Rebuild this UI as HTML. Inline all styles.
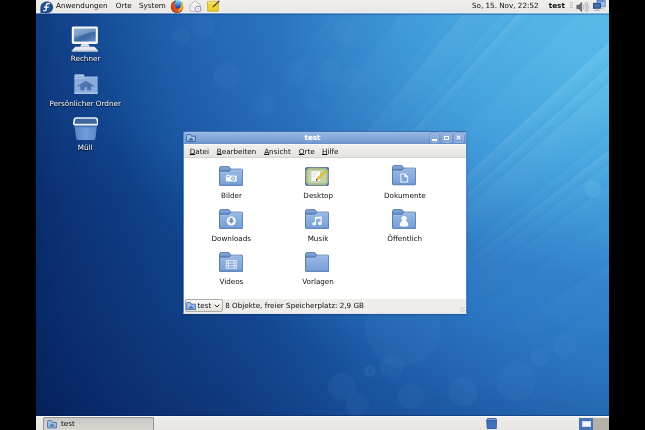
<!DOCTYPE html>
<html lang="de">
<head>
<meta charset="utf-8">
<title>test</title>
<style>
*{box-sizing:border-box;margin:0;padding:0}
html,body{width:645px;height:430px;background:#000;overflow:hidden}
body{font-family:"DejaVu Sans","Liberation Sans",sans-serif;font-size:7.2px;line-height:9px;color:#0c0c0c;position:relative}
.abs{position:absolute}
#desk{position:absolute;left:36px;top:0;width:573px;height:430px;overflow:hidden;opacity:.999;
 background:
  linear-gradient(90deg, rgba(0,12,56,.24) 0px, rgba(0,12,56,.14) 25px, rgba(0,12,56,.05) 70px, rgba(0,12,56,0) 130px),
  radial-gradient(ellipse 340px 340px at 0px 450px, rgba(0,14,62,.42) 0%, rgba(0,14,62,.24) 50%, rgba(0,14,62,0) 100%),
  linear-gradient(180deg, rgba(44,126,204,.24) 0%, rgba(44,124,200,.12) 22%, rgba(8,28,80,0) 46%, rgba(8,28,90,0) 72%, rgba(4,22,84,.10) 88%, rgba(2,18,76,.22) 100%),
  radial-gradient(ellipse 580px 440px at 620px -5px, rgba(100,208,244,1) 0%, rgba(88,194,238,.98) 20%, rgba(70,168,226,.9) 42%, rgba(54,136,206,.58) 66%, rgba(40,112,192,0) 100%),
  linear-gradient(95deg,#0d3b86 0%,#124994 25%,#17509d 42%,#1d5ca9 60%,#266ebc 80%,#2b7cc6 100%);
}
#rays{position:absolute;left:0;top:0;width:573px;height:430px;
 background:conic-gradient(from 0deg at -165px 732px,rgba(255,255,255,0) 0deg,rgba(255,255,255,0) 29deg,rgba(255,255,255,0.07) 29.55deg,rgba(255,255,255,0.01) 30.80deg,rgba(255,255,255,0.05) 30.85deg,rgba(255,255,255,0.01) 32.60deg,rgba(255,255,255,0.13) 32.65deg,rgba(255,255,255,0.02) 33.30deg,rgba(255,255,255,0.09) 33.35deg,rgba(255,255,255,0.01) 34.00deg,rgba(255,255,255,0.05) 34.05deg,rgba(255,255,255,0.01) 36.40deg,rgba(255,255,255,0.07) 36.45deg,rgba(255,255,255,0.01) 38.80deg,rgba(255,255,255,0.05) 38.85deg,rgba(255,255,255,0.01) 39.50deg,rgba(255,255,255,0.11) 39.55deg,rgba(255,255,255,0.02) 41.30deg,rgba(255,255,255,0.07) 41.35deg,rgba(255,255,255,0.01) 42.00deg,rgba(255,255,255,0.13) 42.05deg,rgba(255,255,255,0.02) 42.70deg,rgba(255,255,255,0.05) 42.75deg,rgba(255,255,255,0.01) 44.50deg,rgba(255,255,255,0.05) 44.55deg,rgba(255,255,255,0.01) 46.90deg,rgba(255,255,255,0.13) 46.95deg,rgba(255,255,255,0.02) 47.90deg,rgba(255,255,255,0.13) 47.95deg,rgba(255,255,255,0.02) 48.60deg,rgba(255,255,255,0.11) 48.65deg,rgba(255,255,255,0.02) 51.00deg,rgba(255,255,255,0.07) 51.05deg,rgba(255,255,255,0.01) 51.70deg,rgba(255,255,255,0.13) 51.75deg,rgba(255,255,255,0.02) 52.40deg,rgba(255,255,255,0.09) 52.45deg,rgba(255,255,255,0.01) 53.40deg,rgba(255,255,255,0.07) 53.45deg,rgba(255,255,255,0.01) 55.20deg,rgba(255,255,255,0.05) 55.25deg,rgba(255,255,255,0.01) 57.60deg,rgba(255,255,255,0.09) 57.65deg,rgba(255,255,255,0.01) 60.00deg,rgba(255,255,255,0.07) 60.05deg,rgba(255,255,255,0.01) 62.40deg,rgba(255,255,255,0) 62.90deg,rgba(255,255,255,0) 360deg);
 -webkit-mask-image:radial-gradient(ellipse 340px 340px at 573px 30px,#000 0%,rgba(0,0,0,.85) 40%,rgba(0,0,0,.4) 70%,transparent 100%);
 mask-image:radial-gradient(ellipse 340px 340px at 573px 30px,#000 0%,rgba(0,0,0,.85) 40%,rgba(0,0,0,.4) 70%,transparent 100%);
}
.bk{position:absolute;border-radius:50%;background:rgba(120,190,240,.07);transform:translate(-50%,-50%);filter:blur(.8px)}
.panel{position:absolute;left:0;width:573px}
#top{top:0;height:13px;border-bottom:1px solid #e9eff8;background:linear-gradient(#f1efec,#eae8e4);box-shadow:0 1px 0 rgba(205,222,245,.5),0 2px 0 rgba(8,36,96,.30)}
#bot{top:416px;height:14px;border-top:1px solid #fafafa;background:linear-gradient(#eeece9,#e8e6e2);box-shadow:0 -1px 0 rgba(0,18,64,.32)}
.t{position:absolute;white-space:nowrap;line-height:9px}
.w{color:#fff;text-shadow:0 1px 1px rgba(0,0,0,.85),0 0 1px rgba(0,0,0,.5)}
.c{transform:translateX(-50%)}
u{text-decoration:underline;text-underline-offset:.3px;text-decoration-thickness:.6px}
#win{position:absolute;left:147px;top:131px;width:283.5px;height:183px;background:#7a9fd4;border-radius:3px 3px 0 0;
 border:1px solid #5585c6;border-top-color:#3f6cae;border-right-color:#4c8ccf;border-bottom-color:#dde5f1;box-shadow:0 1px 2px rgba(0,0,30,.25)}
#tb{position:absolute;left:0;top:0;width:281.5px;height:12px;border-radius:2px 2px 0 0;background:linear-gradient(#a6c4ea 0%,#93b5e2 10%,#86aadb 45%,#7299d0 92%,#5f8ac6 100%)}
#mb{position:absolute;left:0;top:12px;width:281.5px;height:14px;background:linear-gradient(#f1efec,#e6e4df);border-top:1px solid #fbfaf9;border-bottom:1px solid #d6d3cd}
#ct{position:absolute;left:0;top:26px;width:281.5px;height:141px;background:#fff}
#sb{position:absolute;left:0;top:167px;width:281.5px;height:14px;background:#efedea}
.wb{position:absolute;top:1.2px;width:9.5px;height:9.5px;border:1px solid #9dbae3;border-radius:2.5px;background:linear-gradient(#92b2e0,#7da2d6);box-shadow:0 0 0 .6px #6188c1}
</style>
</head>
<body>
<div id="desk">
 <div id="rays"></div>
 <div class="bk" style="left:529px;top:346px;width:24px;height:24px"></div>
 <div class="bk" style="left:503px;top:358px;width:19px;height:19px"></div>
 <div class="bk" style="left:480px;top:381px;width:40px;height:40px;background:rgba(120,190,240,.06)"></div>
 <div class="bk" style="left:427px;top:392px;width:30px;height:30px"></div>
 <div class="bk" style="left:375px;top:396px;width:26px;height:26px"></div>
 <div class="bk" style="left:356px;top:366px;width:24px;height:24px;background:rgba(120,190,240,.07)"></div>
 <div class="bk" style="left:367px;top:329px;width:76px;height:76px;background:rgba(120,190,240,.05)"></div>
 <div class="bk" style="left:306px;top:387px;width:28px;height:28px;background:rgba(120,190,240,.07)"></div>
 <div class="bk" style="left:321px;top:405px;width:24px;height:24px;background:rgba(120,190,240,.07)"></div>
 <div class="bk" style="left:334px;top:371px;width:10px;height:10px;background:rgba(90,150,220,.10);border:1.500px solid rgba(120,175,235,.28)"></div>
 <div class="bk" style="left:557px;top:189px;width:17px;height:17px;background:rgba(150,215,250,.16)"></div>

 <div class="bk" style="left:145px;top:36px;width:18px;height:18px;background:rgba(130,190,240,.055)"></div>
 <div class="bk" style="left:167px;top:26px;width:24px;height:24px;background:rgba(130,190,240,.055)"></div>
 <div class="bk" style="left:191px;top:76px;width:28px;height:28px;background:rgba(130,190,240,.055)"></div>
 <div class="bk" style="left:229px;top:105px;width:22px;height:22px;background:rgba(130,190,240,.055)"></div>
 <div class="bk" style="left:258px;top:73px;width:24px;height:24px;background:rgba(130,190,240,.055)"></div>
 <div class="bk" style="left:294px;top:71px;width:24px;height:24px;background:rgba(130,190,240,.055)"></div>
 <div class="bk" style="left:275px;top:104px;width:16px;height:16px;background:rgba(130,190,240,.055)"></div>
 <div class="bk" style="left:309px;top:32px;width:26px;height:26px;background:rgba(130,190,240,.055)"></div>
 <div class="bk" style="left:316px;top:78px;width:22px;height:22px;background:rgba(130,190,240,.055)"></div>
 <!-- top panel -->
 <div class="panel" id="top"></div>
 <svg class="abs" style="left:4px;top:.5px" width="13.5" height="12.5" viewBox="0 0 13.5 12.5">
  <path d="M6.9.4c3.400 0 6.200 2.600 6.200 5.900s-2.800 5.900-6.200 5.900H1.800c-.9 0-1.400-.5-1.400-1.300V6.300C.4 3 3.500.4 6.900.4z" fill="#264f8f"/>
  <path d="M9.400 2.700c-1.900-.6-3.200.3-3.200 2v3.200c0 1.400-1 2.200-2.500 1.800M4.400 6.200h3.900" stroke="#fff" stroke-width="1.300" fill="none" stroke-linecap="round"/>
 </svg>
 <div class="t" style="left:20px;top:1.400px">Anwendungen</div>
 <div class="t" style="left:79.800px;top:1.400px">Orte</div>
 <div class="t" style="left:103px;top:1.400px">System</div>
 <!-- firefox -->
 <svg class="abs" style="left:134.300px;top:-.5px" width="14" height="13.500" viewBox="0 0 14 13.500">
  <defs><linearGradient id="fx" x1="0" y1="0" x2="1" y2="0"><stop offset="0" stop-color="#c23a1c"/><stop offset=".5" stop-color="#e0602a"/><stop offset=".78" stop-color="#e89a2c"/><stop offset="1" stop-color="#ecc030"/></linearGradient>
  <linearGradient id="gl" x1="0" y1="0" x2="0" y2="1"><stop offset="0" stop-color="#a6e2f4"/><stop offset=".45" stop-color="#4a9be0"/><stop offset="1" stop-color="#18358a"/></linearGradient></defs>
  <circle cx="7" cy="6.700" r="6.300" fill="#8a2c14"/>
  <circle cx="7" cy="6.600" r="5.900" fill="url(#fx)"/>
  <ellipse cx="7.600" cy="4.100" rx="3.900" ry="4.400" fill="url(#gl)"/>
  <path d="M.9 5c1-1.800 2.300-2.700 3.600-3-.5.900-.4 1.900.2 2.700.7 1 1.300 2.400 1.300 3.400.9.900 2.500 1.100 3.700.4-1 1.700-3.400 2.300-5.300 1.300C2.200 8.700 1.100 7 .9 5z" fill="#d24a22"/>
  <path d="M3.600 1.300c.7-.5 1.500-.8 2.300-.9-.6.700-.8 1.500-.6 2.300z" fill="#5a2a1c"/>
  <path d="M10.800 2.300c1.200 2.200.7 5.400-1.800 7.300 1.700-.3 3.500-2 3.900-4.100.2-1.300-.6-2.700-2.100-3.200z" fill="#e9b52e"/>
 </svg>
 <!-- mail -->
 <svg class="abs" style="left:152.500px;top:0" width="13.500" height="12.500" viewBox="0 0 13.500 12.500">
  <path d="M1 5.200 6.300.6l5.300 4.600v6H1z" fill="#f7f5f3" stroke="#a9a3ad" stroke-width=".8"/>
  <path d="M1.500 5.600 6.300 8.600l4.800-3" fill="none" stroke="#c6c2c4" stroke-width=".6"/>
  <circle cx="9" cy="8.900" r="2.900" fill="#fbfbfd" stroke="#8f7fb8" stroke-width=".9"/>
  <path d="M9 7.300v1.700l1 .6" stroke="#8a6a88" stroke-width=".6" fill="none"/>
 </svg>
 <!-- note -->
 <svg class="abs" style="left:171px;top:0" width="13" height="12" viewBox="0 0 13 12">
  <rect x=".5" y="1.300" width="11" height="10" rx=".6" fill="#f0d535" stroke="#c9ad26" stroke-width=".8"/>
  <rect x="1" y="1.700" width="10" height="2.200" fill="#f7e66a"/>
  <path d="M1 9.300h10v1.600H1z" fill="#e3c52c"/>
  <path d="M12 .3 6.200 5.800l-1 2 2-1L12.800 1.200z" fill="#4d4a3a"/>
 </svg>
 <div class="t" style="left:436px;top:1.400px">So, 15. Nov, 22:52</div>
 <div class="t" style="left:512.800px;top:1.400px;font-weight:bold">test</div>
 <div class="abs" style="left:534.300px;top:2px;width:3px;height:7px;background:radial-gradient(circle at .6px .6px,#b8b5ae .55px,transparent .7px) 0 0/1.600px 1.700px"></div>
 <!-- speaker -->
 <svg class="abs" style="left:540px;top:1px" width="13" height="12" viewBox="0 0 13 12">
  <path d="M.8 4.300h2L5.600 1.400v9.200L2.800 7.700h-2z" fill="#6e6e6a" stroke="#4a4a46" stroke-width=".6"/>
  <path d="M7.200 3.600c1 1.300 1 3.500 0 4.800M8.900 2c1.800 2.300 1.800 5.700 0 8M10.500 1c2.200 3 2.200 7 0 10" stroke="#8e9bb5" stroke-width=".8" fill="none"/>
 </svg>
 <!-- network -->
 <svg class="abs" style="left:556.500px;top:.3px" width="13" height="12" viewBox="0 0 13 12">
  <rect x="4" y=".5" width="8.200" height="6.300" fill="#9cbde9" stroke="#5579b2" stroke-width=".7"/>
  <path d="M4 .5h8.200v1.300H4z" fill="#5d84c0"/>
  <path d="M9 6.800h1.600v2h1.900v.8H8z" fill="#c3cbd9"/>
  <rect x=".5" y="3.200" width="7" height="5.200" fill="#2a4b8a" stroke="#223c70" stroke-width=".7"/>
  <rect x="1.400" y="4.100" width="5.200" height="3.400" fill="#4a75ba"/>
  <path d="M3 8.700h2v1.300h1.800v1H1.200v-1H3z" fill="#b4bfd2"/>
 </svg>

 <!-- desktop icons -->
 <svg class="abs" style="left:35.200px;top:26.200px" width="27.800" height="26.300" viewBox="0 0 27.500 26.500" preserveAspectRatio="none">
  <defs><linearGradient id="sc" x1="0" y1="0" x2="1" y2="1"><stop offset="0" stop-color="#86a5cc"/><stop offset=".42" stop-color="#4d7ab2"/><stop offset=".56" stop-color="#3a679f"/><stop offset="1" stop-color="#6c92c4"/></linearGradient></defs>
  <rect x=".8" y=".6" width="25.800" height="17.600" rx="1.500" fill="#f7f8fa"/>
  <rect x="2.900" y="2.700" width="21.600" height="13" fill="url(#sc)"/>
  <path d="M2.900 11.500C10 9 18 6.500 24.500 5.800V2.700H2.900z" fill="#a6c0de" opacity=".45"/>
  <path d="M10.300 18.200h7l1.300 2.600H9z" fill="#dde1e9"/>
  <path d="M4.300 20.800h19l3.600 4.100H.6z" fill="#f3f4f7"/>
  <path d="M4.500 22h18.500M3.300 23.400h21" stroke="#c5cad6" stroke-width=".6" stroke-dasharray="1.100 .5"/>
  <path d="M.7 24.900h26.100v1H.7z" fill="#d3d7e0"/>
 </svg>
 <div class="t w c" style="left:49.600px;top:54px">Rechner</div>

 <svg class="abs" style="left:37.500px;top:73.800px" width="24" height="20.200" viewBox="0 0 24 20.200">
  <path d="M.3 2c0-1 .6-1.700 1.600-1.700h6.800c.9 0 1.500.5 1.800 1.400l.4 1.300H.3z" fill="#a3c0e7"/>
  <path d="M.3 4.500 .3 3h10.600l.3-.3h11.600c.6 0 .9.300.9.900v15.400c0 .6-.3.900-.9.900H1.200c-.6 0-.9-.3-.9-.9z" fill="#8aacdc"/>
  <path d="M.3 4.400h10l1-1.300h12.400" fill="none" stroke="#c3d7f1" stroke-width=".6"/>
  <path d="M.3 18.500h23.400v.5c0 .6-.3.900-.9.900H1.200c-.6 0-.9-.3-.9-.9z" fill="#a9c4e8"/>
  <path d="M11.800 6.800 3.400 12l.7.900 7.700-4.700 7.700 4.700.7-.9zM6.300 11.500v4.800h4.200v-3h2.600v3h4.200v-4.800l-5.500-3.300z" fill="#4c74ae"/>
 </svg>
 <div class="t w c" style="left:49.200px;top:98.600px">Persönlicher Ordner</div>

 <svg class="abs" style="left:36.700px;top:117.400px" width="25.600" height="23.600" viewBox="0 0 26 24">
  <defs><linearGradient id="tr" x1="0" y1="0" x2="1" y2="0"><stop offset="0" stop-color="#5685c5"/><stop offset=".5" stop-color="#6e9dd9"/><stop offset="1" stop-color="#5a89c9"/></linearGradient></defs>
  <path d="M1.400 7.200h23.200l-1.800 14.500c-.2 1.100-.8 1.700-1.900 1.700H5.100c-1.100 0-1.700-.6-1.900-1.700z" fill="url(#tr)"/>
  <path d="M1.400 7.200h23.200l-.4 3.200H1.800z" fill="#4673b2"/>
  <path d="M3 1h20c.8 0 1.300.4 1.500 1.100l.8 4.300c.1.800-.3 1.300-1.100 1.300H1.800c-.8 0-1.200-.5-1.100-1.300l.8-4.300C1.700 1.400 2.200 1 3 1z" fill="#40659f" stroke="#edf2f9" stroke-width="1.700" stroke-linejoin="round"/>
 </svg>
 <div class="t w c" style="left:49.200px;top:143.200px">Müll</div>

 <!-- window -->
 <div id="win">
  <div id="tb"></div>
  <svg class="abs" style="left:2.300px;top:2px" width="10" height="8" viewBox="0 0 10 8">
   <path d="M.6 2.200v-.9c0-.5.300-.8.800-.8h2.500c.5 0 .8.200 1 .7l.3 1h4.200v5.300H.6z" fill="#a9c5ea" stroke="#34609f" stroke-width=".9"/>
   <path d="M2.600 5.400 5 3.700l2.400 1.700v1H2.600z" fill="#34609f"/>
  </svg>
  <div class="t c" style="left:128.500px;top:1.400px;font-weight:bold;color:#fff;text-shadow:0 0 1px rgba(255,255,255,.5)">test</div>
  <div class="wb" style="left:245.500px"><i class="abs" style="left:1.800px;top:5.300px;width:4.500px;height:1.200px;background:#fff"></i></div>
  <div class="wb" style="left:258px"><i class="abs" style="left:1.300px;top:1.600px;width:5px;height:4.600px;border:.8px solid #fff;border-top-width:1.600px"></i></div>
  <div class="wb" style="left:270px"><svg class="abs" style="left:1.200px;top:1.200px" width="5" height="5" viewBox="0 0 5 5"><path d="M.6.600l3.800 3.800M4.400.600l-3.800 3.800" stroke="#fff" stroke-width="1.050"/></svg></div>
  <div id="mb"></div>
  <div class="t" style="left:5.700px;top:15px"><u>D</u>atei</div>
  <div class="t" style="left:32.800px;top:15px"><u>B</u>earbeiten</div>
  <div class="t" style="left:80.200px;top:15px"><u>A</u>nsicht</div>
  <div class="t" style="left:114.800px;top:15px"><u>O</u>rte</div>
  <div class="t" style="left:138px;top:15px"><u>H</u>ilfe</div>
  <div id="ct"></div>
  <div id="sb"></div>
  <div class="abs" style="left:1px;top:167px;width:37.700px;height:13px;border:1px solid #aeaba4;border-radius:2px;background:linear-gradient(#f8f7f5,#e4e2dd)"></div>
  <svg class="abs" style="left:2px;top:169.800px" width="10" height="8" viewBox="0 0 10 8">
   <path d="M.6 2.200v-.9c0-.5.300-.8.800-.8h2.500c.5 0 .8.200 1 .7l.3 1h4.200v5.300H.6z" fill="#a3c0e8" stroke="#436db0" stroke-width=".9"/>
   <path d="M2.600 5.400 5 3.700l2.400 1.700v1H2.600z" fill="#436db0"/>
  </svg>
  <div class="t" style="left:13.400px;top:169.300px">test</div>
  <svg class="abs" style="left:30px;top:172px" width="6" height="4" viewBox="0 0 6 4"><path d="M.7.700 3 3 5.300.700" fill="none" stroke="#333" stroke-width="1"/></svg>
  <div class="t" style="left:41.200px;top:169.300px">8 Objekte, freier Speicherplatz: 2,9 GB</div>
  <div class="abs" style="left:275.500px;top:174.500px;width:5px;height:5px;background:repeating-linear-gradient(135deg,transparent 0 1.200px,#cbc8c2 1.200px 2px)"></div>

  <!-- file icons -->
  <svg class="abs" style="left:35px;top:33.500px" width="24.200" height="20.400" viewBox="0 0 24 20"><use href="#fold"/>
   <path d="M6.800 9.300h1v-.8h2.400v.8h7.300v5.900H6.800z" fill="#f5f8fc"/><circle cx="14" cy="12.300" r="1.900" fill="#7198cf"/><circle cx="14" cy="12.300" r="1.100" fill="#eef3fa"/><path d="M8 10.500h2.200" stroke="#5a82bd" stroke-width=".8"/></svg>
  <div class="t c" style="left:47.500px;top:59px">Bilder</div>

  <svg class="abs" style="left:121px;top:34.500px" width="24.200" height="19" viewBox="0 0 24.200 19">
   <rect x=".5" y=".5" width="23.200" height="18" rx="2.500" fill="#a7bd8a" stroke="#6f8699" stroke-width="1"/>
   <rect x="2.300" y="2.200" width="19.600" height="14.600" rx="3" fill="#c5d6a6" stroke="#93a97d" stroke-width=".5"/>
   <path d="M.3 4 4 .3H1.500C.7.300.3.700.3 1.500zM23.900 4 20.200.3h2.500c.8 0 1.200.4 1.200 1.200zM.3 15l3.700 3.700H1.500c-.8 0-1.200-.4-1.200-1.200zM23.900 15l-3.700 3.700h2.500c.8 0 1.200-.4 1.200-1.200z" fill="#546d9c"/>
   <rect x="6" y="3.900" width="9.500" height="10.600" fill="#fbfbf6" stroke="#b3b5a0" stroke-width=".5"/>
   <path d="M7.300 6h5M7.300 7.800h4M7.300 9.600h3" stroke="#d4d4c6" stroke-width=".6"/>
   <path d="M20 3.600l1.500 1.500-8.300 7.500-2 .8.600-2.100z" fill="#ecc534" stroke="#b08f1d" stroke-width=".4"/>
   <circle cx="11.600" cy="13" r=".7" fill="#2b2b2b"/>
  </svg>
  <div class="t c" style="left:134.200px;top:59px">Desktop</div>

  <svg class="abs" style="left:208px;top:33.300px" width="24.200" height="20.400" viewBox="0 0 24 20"><use href="#fold"/>
   <path d="M8.300 8.300h4.600l3.100 3v5.900H8.300z" fill="#f5f8fc"/><path d="M9.300 9.300h3v2.700h2.700v4.200H9.300z" fill="#7fa3d6"/></svg>
  <div class="t c" style="left:220.900px;top:59px">Dokumente</div>

  <svg class="abs" style="left:35px;top:77px" width="24.200" height="20.400" viewBox="0 0 24 20"><use href="#fold"/>
   <circle cx="12.200" cy="11.800" r="4.500" fill="#f8fafd"/><path d="M10.800 8.800h2.800v2.400h1.800l-3.200 3.400-3.200-3.400h1.800z" fill="#7d95bd"/></svg>
  <div class="t c" style="left:47.300px;top:102px">Downloads</div>

  <svg class="abs" style="left:121.300px;top:77px" width="24.200" height="20.400" viewBox="0 0 24 20"><use href="#fold"/>
   <path d="M9.800 7.900 16.600 7.300v6.900a1.900 1.500 0 1 1-1.200-1.400V9.200l-4.400.5v5a1.900 1.500 0 1 1-1.200-1.400z" fill="#f8fafd"/></svg>
  <div class="t c" style="left:134px;top:102px">Musik</div>

  <svg class="abs" style="left:208px;top:76.500px" width="24.200" height="20.400" viewBox="0 0 24 20"><use href="#fold"/>
   <circle cx="12" cy="9.400" r="2.600" fill="#f8fafd"/><path d="M7.900 16.800c-.4-3.400 1.400-5.200 4.100-5.200s4.500 1.800 4.100 5.200c-2.200.9-6 .9-8.200 0z" fill="#f8fafd"/></svg>
  <div class="t c" style="left:220.700px;top:102px">Öffentlich</div>

  <svg class="abs" style="left:35px;top:120px" width="24.200" height="20.400" viewBox="0 0 24 20"><use href="#fold"/>
   <path d="M6.800 8.300h10.700M6.800 10.900h10.700M6.800 13.500h10.700M6.800 16.100h10.700M7.200 8.300v7.800M9.400 8.300v7.800M14.900 8.300v7.800M17.100 8.300v7.800" stroke="#eef3fa" stroke-width=".8" fill="none"/></svg>
  <div class="t c" style="left:47.400px;top:145px">Videos</div>

  <svg class="abs" style="left:121.300px;top:120px" width="24.200" height="20.400" viewBox="0 0 24 20"><use href="#fold"/></svg>
  <div class="t c" style="left:134px;top:145px">Vorlagen</div>
 </div>

 <!-- bottom panel -->
 <div class="panel" id="bot"></div>
 <div class="abs" style="left:6.500px;top:417.300px;width:111.700px;height:13px;border:1px solid #96948e;border-bottom:0;border-radius:2px 2px 0 0;background:linear-gradient(#cbc9c4,#d8d6d1)"></div>
 <svg class="abs" style="left:11px;top:420px" width="10" height="8.500" viewBox="0 0 10 8.500">
  <path d="M.6 2.400v-1c0-.5.300-.8.800-.8h2.500c.5 0 .8.200 1 .7l.3 1.100h4.200v5.500H.6z" fill="#a3c0e8" stroke="#436db0" stroke-width=".9"/>
  <path d="M2.500 5.500 5 3.800l2.500 1.700v1H2.500z" fill="#4a73b0"/>
 </svg>
 <div class="t" style="left:25px;top:419px">test</div>
 <svg class="abs" style="left:449.500px;top:417.500px" width="11.500" height="11.500" viewBox="0 0 11.500 11.500">
  <path d="M.6 2.600h10.300l-.7 8.400H1.300z" fill="#3f70ba" stroke="#2b508f" stroke-width=".7"/>
  <path d="M1.500.5h8.500l.9 2.100H.6z" fill="#6f9ad6" stroke="#2b508f" stroke-width=".7"/>
 </svg>
 <div class="abs" style="left:542.500px;top:418px;width:14.500px;height:12px;background:#4873b7"></div>
 <div class="abs" style="left:546px;top:421px;width:8.500px;height:5.500px;background:#f4f7fb;border:1px solid #c9d8ee"></div>
 <div class="abs" style="left:557px;top:418px;width:15.500px;height:12px;background:#b4b1ab"></div>
</div>

<svg width="0" height="0" style="position:absolute">
 <defs>
  <linearGradient id="fg" x1="0" y1="0" x2="0" y2="1"><stop offset="0" stop-color="#9bbae5"/><stop offset="1" stop-color="#789ed6"/></linearGradient>
  <linearGradient id="ft" x1="0" y1="0" x2="0" y2="1"><stop offset="0" stop-color="#8db0de"/><stop offset="1" stop-color="#5f89c5"/></linearGradient>
  <g id="fold">
   <path d="M.5 2.200c0-1.100.6-1.700 1.600-1.700h7c.8 0 1.400.4 1.800 1.200l.7 1.500v2H.5z" fill="url(#ft)" stroke="#4b72ac" stroke-width=".9"/>
   <path d="M.5 5.200h9.800l1.500-2.200h10.700c.7 0 1 .3 1 1v14.500c0 .7-.3 1-1 1H1.500c-.7 0-1-.3-1-1z" fill="url(#fg)" stroke="#4b72ac" stroke-width=".9"/>
   <path d="M1.200 6h9.500l1.500-2.200h10.600" fill="none" stroke="#b3ccee" stroke-width=".5"/>
   <path d="M1 18.600h22" stroke="#6088c4" stroke-width=".6"/>
  </g>
 </defs>
</svg>
</body>
</html>
